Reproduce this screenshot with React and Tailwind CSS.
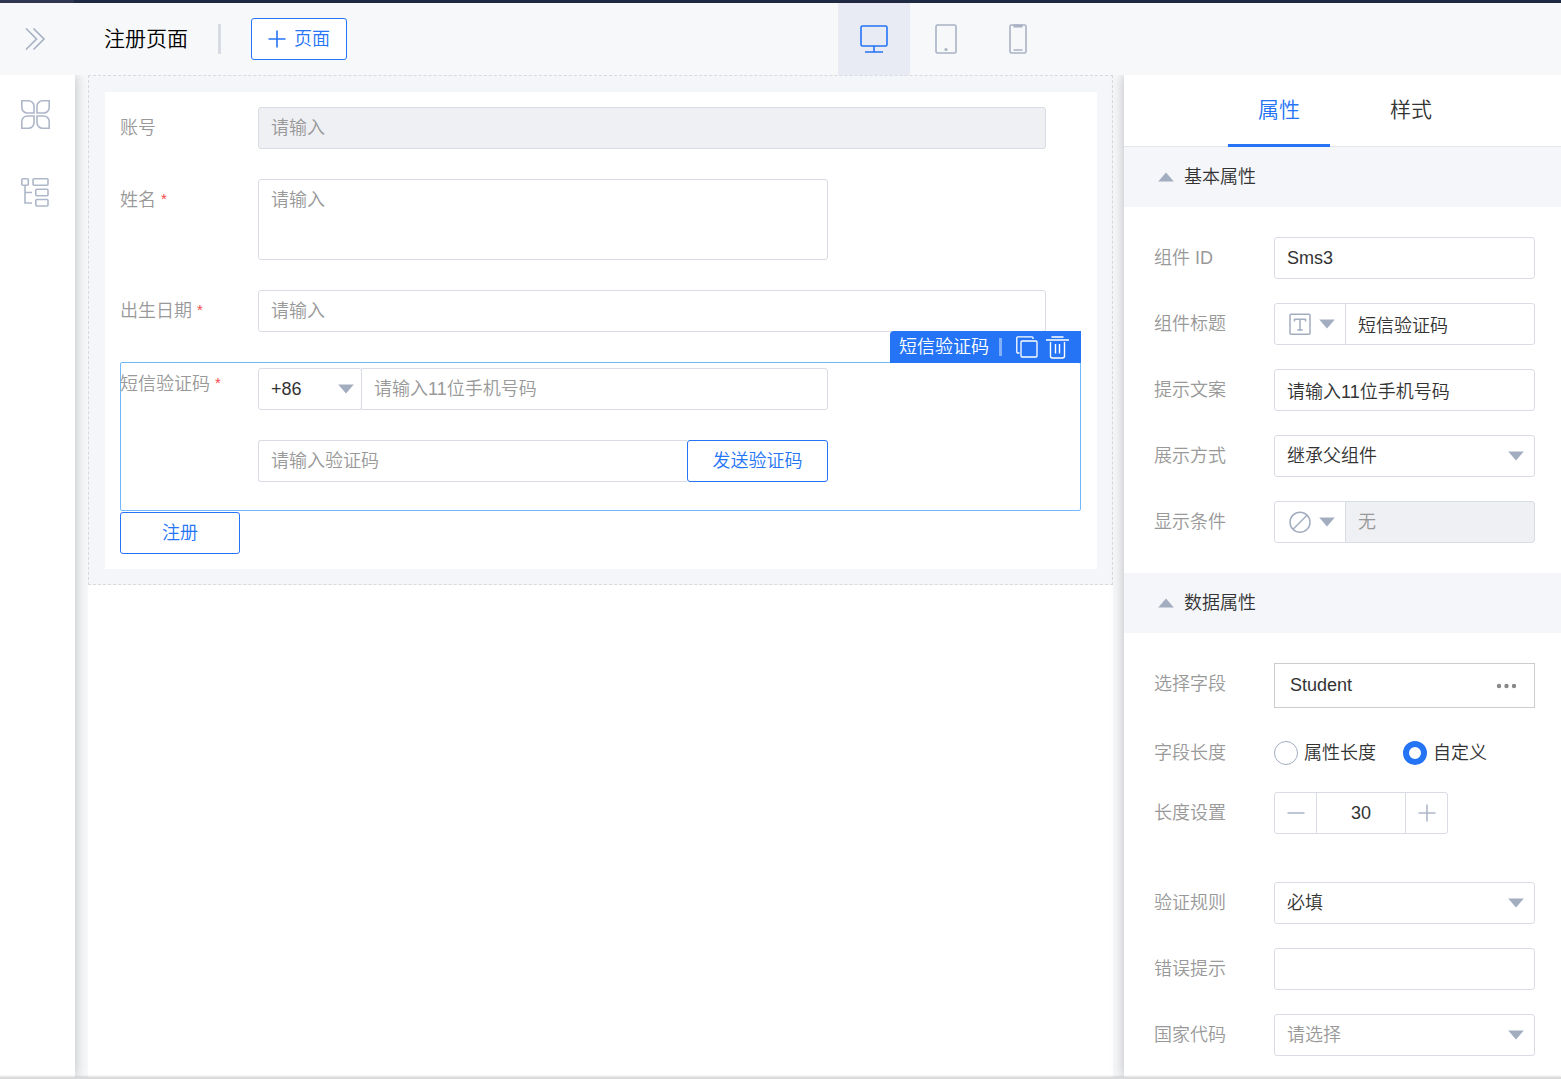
import React from "react";

const field =
  "h-[42px] rounded-[3px] border border-[#dadce5] bg-white px-3 text-[18px] font-[350] text-[#333] outline-none placeholder:text-[#999] placeholder:opacity-100";

function Triangle({ up = false, className = "" }) {
  return (
    <svg width="16" height="10" viewBox="0 0 16 10" fill="#a3adc0" aria-hidden="true" className={className}>
      <path d={up ? "M8 .5 15.8 9.5H.2Z" : "M.2.5h15.6L8 9.5Z"} />
    </svg>
  );
}

function Select({ id, label, options, className = "", arrow = "right-[11px]", muted = false }) {
  return (
    <div className={`relative ${className}`}>
      <select
        id={id}
        aria-label={label}
        className={`${field} w-full appearance-none ${muted ? "text-[#999]!" : ""}`}
      >
        {options.map((o) => (
          <option key={o}>{o}</option>
        ))}
      </select>
      <Triangle className={`pointer-events-none absolute top-4 ${arrow}`} />
    </div>
  );
}

function FormRow({ id, label, required, children }) {
  return (
    <div className="flex items-start">
      <label htmlFor={id} className="flex w-[138px] shrink-0 leading-[42px] whitespace-nowrap text-[#999]">
        {label}
        {required && <span className="ml-[5px] text-[15px] leading-10 text-[#f04848]">*</span>}
      </label>
      {children}
    </div>
  );
}

function PropRow({ id, label, children }) {
  return (
    <div className="flex items-start">
      <label htmlFor={id} className="w-[120px] shrink-0 leading-[42px] text-[#999]">
        {label}
      </label>
      <div className="min-w-0 flex-1">{children}</div>
    </div>
  );
}

function SectionTitle({ children }) {
  return (
    <h2>
      <button type="button" className="flex h-[60px] w-full items-center gap-[10px] bg-[#f5f6fa] pl-[34px] text-[#333]">
        <Triangle up />
        {children}
      </button>
    </h2>
  );
}

function IconField({ id, iconLabel, icon, ...props }) {
  return (
    <div className="flex">
      <button
        type="button"
        aria-label={iconLabel}
        className="flex h-[42px] w-[72px] items-center gap-2 rounded-l-[3px] border border-[#dadce5] bg-white pl-[14px]"
      >
        {icon}
        <Triangle />
      </button>
      <input
        id={id}
        type="text"
        className={`${field} -ml-px w-0 flex-1 rounded-l-none disabled:bg-[#eff0f4]`}
        {...props}
      />
    </div>
  );
}

const TextIcon = (
  <svg width="22" height="22" viewBox="0 0 22 22" fill="none" stroke="#a3adc0" strokeWidth="1.5" aria-hidden="true">
    <rect x="1" y="1.200" width="20" height="20" rx="1" />
    <path d="M5.5 8.500V6.200h11v2.300M11 6.200v10.600M8.300 16.900h5.400" />
  </svg>
);

const BanIcon = (
  <svg width="22" height="22" viewBox="0 0 22 22" fill="none" stroke="#a3adc0" strokeWidth="1.5" aria-hidden="true">
    <circle cx="11" cy="11.200" r="10" />
    <path d="M4 18.200 18 4.200" />
  </svg>
);

function Header() {
  return (
    <header className="flex h-[72px] bg-[#f7f8fa]">
      <div className="flex flex-1 items-center">
        <button type="button" aria-label="展开" className="ml-6">
          <svg width="22" height="24" viewBox="0 0 22 24" fill="none" stroke="#a9b2c5" strokeWidth="1.7">
            <path d="M2 1.5 12.5 12 2 22.5M9.500 1.500 20 12 9.500 22.500" />
          </svg>
        </button>
        <h1 className="ml-[58px] text-[21px] text-black">注册页面</h1>
        <span className="ml-[30px] h-[30px] w-[3px] bg-[#d9dbe4]" />
        <button
          type="button"
          className="ml-[30px] flex h-[42px] w-24 items-center gap-2 rounded-[3px] border border-[#2474f5] bg-white pl-4 text-[#2474f5]"
        >
          <svg width="18" height="18" viewBox="0 0 18 18" stroke="currentColor" strokeWidth="1.600" aria-hidden="true">
            <path d="M9 .5v17M.5 9h17" />
          </svg>
          页面
        </button>
      </div>
      <div className="flex">
        <button type="button" aria-label="桌面" className="flex w-[72px] items-center justify-center bg-[#e8ebf3]">
          <svg width="28" height="28" viewBox="0 0 28 28" fill="none" stroke="#2474f5" strokeWidth="1.6">
            <rect x="1" y="1" width="26" height="20" rx="1.500" />
            <path d="M14 21v6M5 27h18" />
          </svg>
        </button>
        <button type="button" aria-label="平板" className="flex w-[72px] items-center justify-center">
          <svg width="22" height="30" viewBox="0 0 22 30" fill="none" stroke="#a9b2c5" strokeWidth="1.6">
            <rect x="1" y="1" width="20" height="28" rx="1.500" />
            <circle cx="11" cy="25.500" r="1.600" fill="#a9b2c5" stroke="none" />
          </svg>
        </button>
        <button type="button" aria-label="手机" className="flex w-[72px] items-center justify-center">
          <svg width="18" height="30" viewBox="0 0 18 30" fill="none" stroke="#a9b2c5" strokeWidth="1.6">
            <rect x="1" y="1" width="16" height="28" rx="1.500" />
            <path d="M5.200 1.300v1.400h7.600V1.300ZM4.500 26h9" />
          </svg>
        </button>
      </div>
      <div className="w-[507px]" />
    </header>
  );
}

function Sidebar() {
  return (
    <nav className="z-10 flex w-[75px] shrink-0 flex-col items-start gap-[47px] bg-white pt-6 pl-5 shadow-[0_0_12px_rgba(0,0,0,0.25)]">
      <button type="button" aria-label="组件">
        <svg width="31" height="31" viewBox="0 0 31 31" fill="none" stroke="#aeb7c9" strokeWidth="1.6" className="block">
          <path d="M1.800 1.800h6.700a5.500 5.500 0 0 1 5.500 5.500V14H7.300a5.500 5.500 0 0 1-5.500-5.500Z" />
          <path d="M29.200 1.800h-6.700a5.500 5.500 0 0 0-5.500 5.500V14h6.700a5.500 5.500 0 0 0 5.500-5.500Z" />
          <path d="M1.800 29.200h6.700a5.500 5.500 0 0 0 5.500-5.500V17H7.300a5.500 5.500 0 0 0-5.500 5.500Z" />
          <path d="M29.200 29.200h-6.700a5.500 5.500 0 0 1-5.500-5.500V17h6.700a5.500 5.500 0 0 1 5.500 5.500Z" />
        </svg>
      </button>
      <button type="button" aria-label="大纲">
        <svg width="31" height="31" viewBox="0 0 31 31" fill="none" stroke="#aeb7c9" strokeWidth="1.6" className="block">
          <rect x="1.800" y="1.800" width="6.500" height="6.500" rx="1" />
          <rect x="13" y="1.800" width="15" height="6.500" rx="1" />
          <rect x="15.800" y="12.300" width="12.200" height="6.500" rx="1" />
          <rect x="15.800" y="22.500" width="12.200" height="6.500" rx="1" />
          <path d="M5 8.300v17.700h7M5 15.500h7" />
        </svg>
      </button>
    </nav>
  );
}

function SelectedToolbar() {
  return (
    <div className="absolute -top-8 -right-px flex h-8 items-center rounded-tl-[4px] bg-[#2474f5] pr-3 pl-[9px] text-white">
      短信验证码
      <span className="mr-[14px] ml-[10px] h-[18px] w-[3px] bg-[#82b1fa]" />
      <button type="button" aria-label="复制" className="mr-2">
        <svg width="22" height="22" viewBox="0 0 22 22" fill="none" stroke="currentColor" strokeWidth="1.3" className="block">
          <rect x="5" y="5" width="16" height="16" rx="1" />
          <path d="M3.500 17H1.800a1 1 0 0 1-1-1V1.800a1 1 0 0 1 1-1H16a1 1 0 0 1 1 1V3" />
        </svg>
      </button>
      <button type="button" aria-label="删除">
        <svg width="23" height="23" viewBox="0 0 23 23" fill="none" stroke="currentColor" strokeWidth="1.400" className="block">
          <path d="M0 4h23M5.500 1h12M4.500 6v14a2 2 0 0 0 2 2h10a2 2 0 0 0 2-2V6M9.500 8v9.500M13.500 8v9.500" />
        </svg>
      </button>
    </div>
  );
}

function Canvas() {
  return (
    <main className="mr-[11px] ml-[13px] min-w-0 flex-1 bg-white">
      <div className="border border-dashed border-[#d9dadd] bg-[#f5f6fa] pt-4 pr-[15px] pb-[15px] pl-4">
        <form className="bg-white p-[15px]">
          <div className="flex flex-col gap-[30px]">
            <FormRow id="account" label="账号">
              <input id="account" disabled placeholder="请输入" className={`${field} mr-9 min-w-0 flex-1 bg-[#eff0f4]!`} />
            </FormRow>
            <FormRow id="name" label="姓名" required>
              <textarea
                id="name"
                placeholder="请输入"
                className={`${field} h-[81px]! w-[570px] resize-none py-[6px] leading-7`}
              />
            </FormRow>
            <FormRow id="birth" label="出生日期" required>
              <input id="birth" placeholder="请输入" className={`${field} mr-9 min-w-0 flex-1`} />
            </FormRow>
            <div className="relative mr-px h-[149px] rounded-[2px] border border-[#6fb9fb]">
              <SelectedToolbar />
              <div className="-ml-px">
                <FormRow id="phone" label="短信验证码" required>
                  <div className="flex w-[570px] flex-col gap-[30px] pt-[5px]">
                    <div className="flex">
                      <Select label="国家区号" options={["+86"]} className="w-[104px]" arrow="right-2" />
                      <input id="phone" placeholder="请输入11位手机号码" className={`${field} -ml-px w-0 flex-1 rounded-l-none`} />
                    </div>
                    <div className="flex">
                      <input aria-label="验证码" placeholder="请输入验证码" className={`${field} w-0 flex-1 rounded-r-none border-r-0`} />
                      <button type="button" className="h-[42px] w-[141px] rounded-[3px] border border-[#2474f5] text-[#2474f5]">
                        发送验证码
                      </button>
                    </div>
                  </div>
                </FormRow>
              </div>
            </div>
          </div>
          <button type="submit" className="mt-px block h-[42px] w-[120px] rounded-[3px] border border-[#2474f5] text-[#2474f5]">
            注册
          </button>
        </form>
      </div>
    </main>
  );
}

function Radio({ label, ...props }) {
  return (
    <label className="flex items-center gap-[6px] text-[#333]">
      <input
        type="radio"
        name="lengthMode"
        className="size-6 appearance-none rounded-full border border-[#a3adc0] bg-white checked:border-[6px] checked:border-[#2474f5]"
        {...props}
      />
      {label}
    </label>
  );
}

function Inspector() {
  return (
    <aside className="z-10 w-[437px] shrink-0 bg-white shadow-[0_0_12px_rgba(0,0,0,0.25)]">
      <div role="tablist" className="flex h-[72px] gap-[30px] border-b border-[#e3e5ec] pl-[104px] text-[21px]">
        <button type="button" role="tab" aria-selected="true" className="h-[72px] w-[102px] border-b-[3px] border-[#2474f5] text-[#2474f5]">
          属性
        </button>
        <button type="button" role="tab" aria-selected="false" className="h-[72px] w-[102px] border-b-[3px] border-transparent text-[#333]">
          样式
        </button>
      </div>
      <SectionTitle>基本属性</SectionTitle>
      <div className="flex flex-col gap-6 py-[30px] pr-[26px] pl-[30px]">
        <PropRow id="cid" label="组件 ID">
          <input id="cid" defaultValue="Sms3" className={`${field} w-full`} />
        </PropRow>
        <PropRow id="ctitle" label="组件标题">
          <IconField id="ctitle" iconLabel="标题类型" icon={TextIcon} defaultValue="短信验证码" />
        </PropRow>
        <PropRow id="chint" label="提示文案">
          <input id="chint" defaultValue="请输入11位手机号码" className={`${field} w-full`} />
        </PropRow>
        <PropRow id="cdisplay" label="展示方式">
          <Select id="cdisplay" options={["继承父组件"]} />
        </PropRow>
        <PropRow id="ccond" label="显示条件">
          <IconField id="ccond" iconLabel="条件类型" icon={BanIcon} placeholder="无" disabled />
        </PropRow>
      </div>
      <SectionTitle>数据属性</SectionTitle>
      <div className="flex flex-col gap-6 pt-[30px] pr-[26px] pl-[30px]">
        <PropRow id="cfield" label="选择字段">
          <div className="flex h-[45px] items-center border border-[#ccc] pr-4 pl-[15px]">
            <input id="cfield" defaultValue="Student" className="h-full w-0 flex-1 bg-transparent text-[18px] text-[#333] outline-none" />
            <button type="button" aria-label="选择字段…">
              <svg width="22" height="6" viewBox="0 0 22 6" fill="#888" className="block">
                <circle cx="3" cy="3" r="2.200" />
                <circle cx="10.500" cy="3" r="2.200" />
                <circle cx="18" cy="3" r="2.200" />
              </svg>
            </button>
          </div>
        </PropRow>
        <div className="-mb-[6px] flex items-center" role="radiogroup" aria-labelledby="length-label">
          <span id="length-label" className="w-[120px] leading-[42px] text-[#999]">字段长度</span>
          <div className="flex gap-[27px]">
            <Radio label="属性长度" />
            <Radio label="自定义" defaultChecked />
          </div>
        </div>
        <PropRow id="clen" label="长度设置">
          <div className="mb-6 flex h-[42px] w-[174px] rounded-[3px] border border-[#dadce5] text-[#aeb7c9]">
            <button type="button" aria-label="减少" className="flex w-[41px] items-center justify-center">
              <svg width="18" height="18" viewBox="0 0 18 18" stroke="currentColor" strokeWidth="1.600">
                <path d="M.5 9h17" />
              </svg>
            </button>
            <input id="clen" defaultValue="30" className="w-0 flex-1 border-x border-[#dadce5] text-center text-[18px] text-[#333] outline-none" />
            <button type="button" aria-label="增加" className="flex w-[41px] items-center justify-center">
              <svg width="18" height="18" viewBox="0 0 18 18" stroke="currentColor" strokeWidth="1.600">
                <path d="M.5 9h17M9 .5v17" />
              </svg>
            </button>
          </div>
        </PropRow>
        <PropRow id="crule" label="验证规则">
          <Select id="crule" options={["必填"]} />
        </PropRow>
        <PropRow id="cerror" label="错误提示">
          <input id="cerror" className={`${field} w-full`} />
        </PropRow>
        <PropRow id="ccountry" label="国家代码">
          <Select id="ccountry" options={["请选择"]} muted />
        </PropRow>
      </div>
    </aside>
  );
}

export default function App() {
  return (
    <div className="flex min-h-screen flex-col bg-[#f7f8fa] font-['Liberation_Sans','Noto_Sans_CJK_SC',sans-serif] text-[18px] font-[350]">
      <div className="flex h-[3px] bg-[#1f2942]">
        <div className="w-[74px] bg-[#2f3750]" />
      </div>
      <Header />
      <div className="flex flex-1 overflow-hidden">
        <Sidebar />
        <Canvas />
        <Inspector />
      </div>
      <footer className="z-20 h-[2px] bg-[#d8dadc] shadow-[0_-1px_2px_rgba(0,0,0,0.12)]" />
    </div>
  );
}
